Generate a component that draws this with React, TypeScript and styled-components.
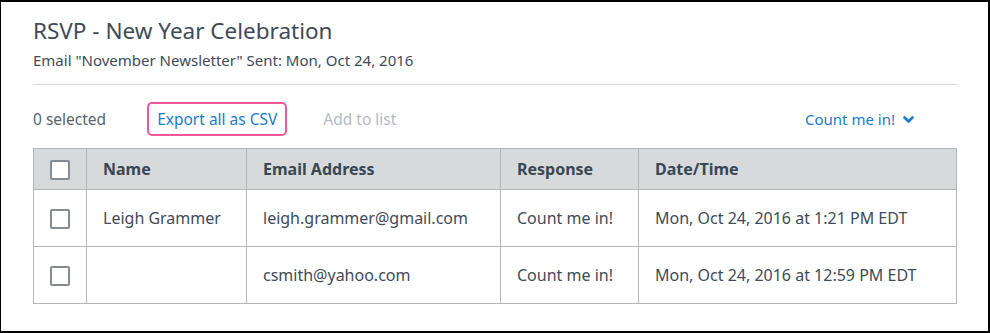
import React from "react";
import styled, { createGlobalStyle } from "styled-components";

const Global = createGlobalStyle`
  html, body { margin: 0; padding: 0; background: #fff; }
  body { font-family: "Noto Sans", "Open Sans", sans-serif; }
  * { box-sizing: border-box; }
`;

const Frame = styled.div`
  width: 990px;
  height: 333px;
  border: 2px solid #000;
  border-left-width: 1px;
  padding: 15px 32px 0 32px;
  display: flex;
  flex-direction: column;
  color: #3e4a56;
  overflow: hidden;
`;

const Title = styled.h1`
  margin: 0;
  font-size: 22.5px;
  font-weight: 400;
  line-height: 28px;
  color: #3f4b57;
`;

const Subtitle = styled.div`
  margin-top: 5px;
  font-size: 15px;
  line-height: 20px;
  color: #3f4b57;
`;

const Divider = styled.hr`
  margin: 14px 0 0 0;
  border: none;
  border-top: 1px solid #d6dadd;
  width: 924px;
`;

const Toolbar = styled.div`
  display: flex;
  align-items: center;
  height: 36px;
  margin-top: 16px;
  width: 924px;
  font-size: 15.5px;
`;

const Count = styled.span`
  color: #5a6570;
`;

const ExportButton = styled.span`
  margin-left: 41px;
  height: 34px;
  padding: 0 8px;
  display: flex;
  align-items: center;
  border: 2px solid #f0579a;
  border-radius: 5px;
  color: #1b7bcc;
`;

const Disabled = styled.span`
  margin-left: 36px;
  color: #b6bbc1;
`;

const Filter = styled.span`
  margin-left: auto;
  margin-right: 43px;
  display: flex;
  align-items: center;
  gap: 8px;
  font-size: 15px;
  color: #1b7bcc;
`;

const Table = styled.table`
  margin-top: 11px;
  width: 924px;
  border-collapse: collapse;
  font-size: 16px;
  table-layout: fixed;
`;

const Th = styled.th<{ $w?: number }>`
  ${(p) => (p.$w ? `width: ${p.$w}px;` : "")}
  height: 41px;
  background: #d6dadd;
  border: 1px solid #b2b7bc;
  text-align: left;
  padding: 0 0 0 16px;
  font-weight: 700;
  color: #3a4651;
`;

const Td = styled.td`
  height: 57px;
  border: 1px solid #b2b7bc;
  padding: 0 0 0 16px;
  color: #3f4b57;
  white-space: nowrap;
`;

const BoxCell = styled.td`
  height: 57px;
  border: 1px solid #b2b7bc;
  padding: 0;
  text-align: center;
`;

const BoxHead = styled.th`
  width: 53px;
  height: 41px;
  background: #d6dadd;
  border: 1px solid #b2b7bc;
  padding: 0;
  text-align: center;
`;

const Check = styled.span`
  display: inline-block;
  vertical-align: middle;
  width: 20px;
  height: 20px;
  border: 2px solid #858c94;
  border-radius: 2px;
  background: #fff;
`;

const rows = [
  { name: "Leigh Grammer", email: "leigh.grammer@gmail.com", resp: "Count me in!", date: "Mon, Oct 24, 2016 at 1:21 PM EDT" },
  { name: "", email: "csmith@yahoo.com", resp: "Count me in!", date: "Mon, Oct 24, 2016 at 12:59 PM EDT" },
];

export default function App() {
  return (
    <>
      <Global />
      <Frame>
        <Title>RSVP - New Year Celebration</Title>
        <Subtitle>Email "November Newsletter" Sent: Mon, Oct 24, 2016</Subtitle>
        <Divider />
        <Toolbar>
          <Count>0 selected</Count>
          <ExportButton>Export all as CSV</ExportButton>
          <Disabled>Add to list</Disabled>
          <Filter>
            Count me in!
            <svg width="11" height="7" viewBox="0 0 11 7">
              <path d="M1.5 1.5 L5.5 5.5 L9.5 1.5" fill="none" stroke="#1b7bcc" strokeWidth="2.6" strokeLinecap="round" strokeLinejoin="round" />
            </svg>
          </Filter>
        </Toolbar>
        <Table>
          <thead>
            <tr>
              <BoxHead><Check /></BoxHead>
              <Th $w={160}>Name</Th>
              <Th $w={254}>Email Address</Th>
              <Th $w={138}>Response</Th>
              <Th>Date/Time</Th>
            </tr>
          </thead>
          <tbody>
            {rows.map((r, i) => (
              <tr key={i}>
                <BoxCell><Check /></BoxCell>
                <Td>{r.name}</Td>
                <Td>{r.email}</Td>
                <Td>{r.resp}</Td>
                <Td>{r.date}</Td>
              </tr>
            ))}
          </tbody>
        </Table>
      </Frame>
    </>
  );
}
